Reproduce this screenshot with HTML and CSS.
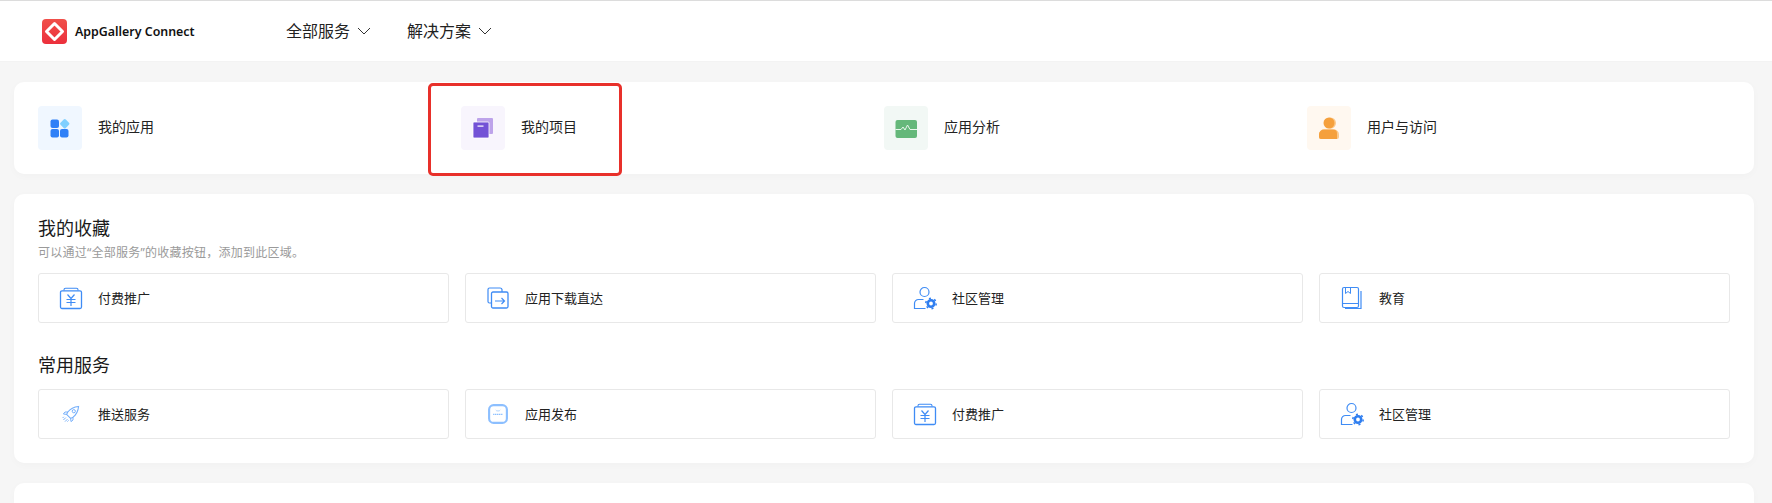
FILE: index.html
```html
<!DOCTYPE html>
<html lang="zh-CN">
<head>
<meta charset="utf-8">
<title>AppGallery Connect</title>
<link rel="stylesheet" href="styles.css">
</head>
<body>
<svg class="defs" width="0" height="0" aria-hidden="true">
  <symbol id="i-pay" viewBox="0 0 24 24">
    <path d="M5 4.500V3.800A1.500 1.500 0 0 1 6.500 2.300h11A1.500 1.500 0 0 1 19 3.800V4.500" fill="none" stroke="currentColor" stroke-width="1.100"/>
    <rect x="1.500" y="4.800" width="21" height="17.700" rx="1.500" fill="none" stroke="currentColor" stroke-width="1.300"/>
    <path d="M8.500 8.500 12 12.500l3.500-4M7.500 13.500h9M7.500 16.500h9M12 12.500V20" fill="none" stroke="currentColor" stroke-width="1.200"/>
  </symbol>
  <symbol id="i-direct" viewBox="0 0 24 24">
    <path d="M5.500 17H3.500A1.500 1.500 0 0 1 2 15.500V3.500A1.500 1.500 0 0 1 3.500 2H14A2 2 0 0 1 16 3.500V6" fill="none" stroke="currentColor" stroke-width="1.200"/>
    <rect x="5.500" y="6" width="16.500" height="16" rx="1.500" fill="none" stroke="currentColor" stroke-width="1.300"/>
    <path d="M9 15h9.500M15.500 12l3 3-3 3" fill="none" stroke="currentColor" stroke-width="1.200"/>
  </symbol>
  <symbol id="i-user" viewBox="0 0 24 24">
    <circle cx="11.500" cy="6" r="4.500" fill="none" stroke="currentColor" stroke-width="1.200"/>
    <path d="M10.500 13.500H5.500A4 4 0 0 0 1.500 17.500V22.500H12.500" fill="none" stroke="currentColor" stroke-width="1.200"/>
    <circle cx="18" cy="17.500" r="3.200" fill="none" stroke="#2f7ef0" stroke-width="2.600"/>
    <circle cx="18" cy="17.500" r="5.200" fill="none" stroke="#2f7ef0" stroke-width="1.500" stroke-dasharray="2 3.450"/>
  </symbol>
  <symbol id="i-book" viewBox="0 0 24 24">
    <rect x="2.500" y="1.500" width="16" height="20" rx="1.500" fill="none" stroke="currentColor" stroke-width="1.200"/>
    <path d="M2.500 17.500h16M21 5v17.500H5" fill="none" stroke="currentColor" stroke-width="1.200"/>
    <path d="M5.500 2v5.500l2.500-2 2.500 2V2" fill="none" stroke="currentColor" stroke-width="1"/>
  </symbol>
  <symbol id="i-rocket" viewBox="-3 -3 30 30">
    <path d="M8 9.500C11 5.500 16 3 21.500 2.500 21 8 18.500 13 14.500 16l-3 1.500-5-5z" fill="none" stroke="currentColor" stroke-width="1.300"/>
    <circle cx="15.500" cy="8.500" r="2" fill="none" stroke="currentColor" stroke-width="1.200"/>
    <path d="M8 9.500H4.500L2.500 12l4 .5M14.500 16v3.500L12 21.500l-.5-4M5.500 16.500l-3 3M7.500 18.500l-3 3M3 15.500 1.500 17M9 20l-1.500 1.500" fill="none" stroke="currentColor" stroke-width="1.200"/>
  </symbol>
  <symbol id="i-publish" viewBox="-1.500 -1.500 27 27">
    <rect x="2" y="2" width="20" height="20" rx="5" fill="none" stroke="#8cbfff" stroke-width="2.400"/>
    <path d="M9.500 7.500c.5 1.500 4.500 1.500 5 0" fill="none" stroke="#a9cffd" stroke-width="1"/>
    <path d="M6.500 12.500h11" fill="none" stroke="#8cbfff" stroke-width="1.500" stroke-dasharray="1.500 .6"/>
  </symbol>
</svg>

<div class="top-line"></div>
<header class="header">
  <div class="brand">
    <svg class="logo" viewBox="0 0 25 25" aria-hidden="true">
      <defs>
        <linearGradient id="logo-red" x1="0" y1="0" x2="0" y2="1">
          <stop offset="0" stop-color="#f0504a"/>
          <stop offset="1" stop-color="#ec2f3c"/>
        </linearGradient>
      </defs>
      <rect width="25" height="25" rx="4" fill="url(#logo-red)"/>
      <path d="M12.500 4.500 20.500 12.500 12.500 20.500 4.500 12.500z" fill="none" stroke="#fff" stroke-width="3" stroke-linejoin="round"/>
    </svg>
    <span class="brand-name">AppGallery Connect</span>
  </div>
  <nav class="nav">
    <a class="nav-item">全部服务<svg class="chev" viewBox="0 0 14 8" aria-hidden="true"><path d="M1 1l6 6 6-6"/></svg></a>
    <a class="nav-item">解决方案<svg class="chev" viewBox="0 0 14 8" aria-hidden="true"><path d="M1 1l6 6 6-6"/></svg></a>
  </nav>
</header>

<main class="main">
  <section class="card quick">
    <div class="quick-item">
      <span class="badge badge-blue">
        <svg class="badge-icon" viewBox="0 0 44 44" aria-hidden="true">
          <rect x="12.500" y="13.500" width="8.500" height="8.500" rx="2" fill="#2f80f7"/>
          <rect x="12.500" y="23" width="8.500" height="8.500" rx="2" fill="#2f80f7"/>
          <rect x="22" y="23" width="8.500" height="8.500" rx="2" fill="#2f80f7"/>
          <rect x="23" y="14" width="7.500" height="7.500" rx="1.500" fill="#80d0ff" transform="rotate(45 26.750 17.750)"/>
        </svg>
      </span>
      <span class="quick-label">我的应用</span>
    </div>
    <div class="quick-item">
      <span class="badge badge-purple">
        <svg class="badge-icon" viewBox="0 0 44 44" aria-hidden="true">
          <rect x="16" y="12" width="16" height="16" rx="1" fill="#bda3ea"/>
          <rect x="12" y="16" width="16" height="16" rx="1" fill="#7352d6" stroke="#fff" stroke-width=".8"/>
          <rect x="16.500" y="19.500" width="6" height="1.200" fill="#fff"/>
        </svg>
      </span>
      <span class="quick-label">我的项目</span>
    </div>
    <div class="quick-item">
      <span class="badge badge-green">
        <svg class="badge-icon" viewBox="0 0 44 44" aria-hidden="true">
          <rect x="11.500" y="14" width="21.500" height="18" rx="2" fill="#65b87a"/>
          <path d="M11.500 23.500h5.500l2-2.500 2 3 2.500-5 2.500 4.500H33" fill="none" stroke="#e8f6ec" stroke-width="1"/>
        </svg>
      </span>
      <span class="quick-label">应用分析</span>
    </div>
    <div class="quick-item">
      <span class="badge badge-orange">
        <svg class="badge-icon" viewBox="0 0 44 44" aria-hidden="true">
          <circle cx="23.500" cy="17" r="5.500" fill="#fbc98c"/>
          <circle cx="22" cy="17" r="5.500" fill="#f5a03c"/>
          <path d="M14 33a2 2 0 0 1-2-2v-2.500a5 5 0 0 1 5-5h10a5 5 0 0 1 5 5V31a2 2 0 0 1-2 2z" fill="#fbc98c"/>
          <path d="M14 33a2 2 0 0 1-2-2v-2.500a5 5 0 0 1 5-5h9a4 4 0 0 1 4 4V33z" fill="#f5a03c"/>
        </svg>
      </span>
      <span class="quick-label">用户与访问</span>
    </div>
    <div class="highlight"></div>
  </section>

  <section class="card services">
    <h2 class="section-title">我的收藏</h2>
    <p class="section-note">可以通过“全部服务”的收藏按钮，添加到此区域。</p>
    <div class="tiles tiles-fav">
      <div class="tile"><svg class="tile-icon"><use href="#i-pay"/></svg><span class="tile-label">付费推广</span></div>
      <div class="tile"><svg class="tile-icon"><use href="#i-direct"/></svg><span class="tile-label">应用下载直达</span></div>
      <div class="tile"><svg class="tile-icon"><use href="#i-user"/></svg><span class="tile-label">社区管理</span></div>
      <div class="tile"><svg class="tile-icon"><use href="#i-book"/></svg><span class="tile-label">教育</span></div>
    </div>
    <h2 class="section-title section-title-gap">常用服务</h2>
    <div class="tiles tiles-common">
      <div class="tile"><svg class="tile-icon tile-icon-soft"><use href="#i-rocket"/></svg><span class="tile-label">推送服务</span></div>
      <div class="tile"><svg class="tile-icon tile-icon-soft"><use href="#i-publish"/></svg><span class="tile-label">应用发布</span></div>
      <div class="tile"><svg class="tile-icon"><use href="#i-pay"/></svg><span class="tile-label">付费推广</span></div>
      <div class="tile"><svg class="tile-icon"><use href="#i-user"/></svg><span class="tile-label">社区管理</span></div>
    </div>
  </section>

  <section class="card rest"></section>
</main>
</body>
</html>
```

FILE: styles.css
```css
* { box-sizing: border-box; }

html, body {
  margin: 0;
  height: 100%;
  overflow: hidden;
}

body {
  background: #f6f6f6;
  color: #1f1f1f;
  font-family: "Noto Sans", "Noto Sans CJK SC", sans-serif;
  font-size: 14px;
}

.defs { display: block; height: 0; }

.top-line { height: 1px; background: #dcdcdc; }

.header {
  height: 61px;
  background: #fff;
  border-bottom: 1px solid #f3f3f3;
  display: flex;
  align-items: center;
  padding-left: 42px;
}

.brand {
  display: flex;
  align-items: center;
  gap: 8px;
  width: 244px;
}

.logo { width: 25px; height: 25px; flex: none; }

.brand-name {
  font-size: 12.4px;
  font-weight: 600;
  color: #111;
  white-space: nowrap;
}

.nav { display: flex; gap: 36px; }

.nav-item {
  display: flex;
  align-items: center;
  gap: 7px;
  font-size: 16px;
  line-height: 24px;
  color: #222;
}

.chev {
  width: 14px;
  height: 8px;
  fill: none;
  stroke: #333;
  stroke-width: 1;
}

.main {
  padding: 20px 18px 0 14px;
  display: flex;
  flex-direction: column;
  gap: 20px;
}

.card {
  background: #fff;
  border-radius: 10px;
  box-shadow: 0 2px 8px rgba(0, 0, 0, .025);
}

.quick {
  position: relative;
  height: 92px;
  padding: 0 24px;
  display: grid;
  grid-template-columns: repeat(4, 1fr);
  align-items: center;
}

.quick-item {
  display: flex;
  align-items: center;
  gap: 16px;
}

.badge {
  width: 44px;
  height: 44px;
  border-radius: 4px;
  flex: none;
  display: block;
}

.badge-blue { background: #f0f7ff; }
.badge-purple { background: #f8f5fd; }
.badge-green { background: #f2f8f5; }
.badge-orange { background: #fff8f0; }

.badge-icon { display: block; width: 44px; height: 44px; }

.quick-label {
  line-height: 20px;
  padding-bottom: 3px;
  color: #222;
}

.highlight {
  position: absolute;
  left: 414px;
  top: 1px;
  width: 194px;
  height: 93px;
  border: 3px solid #e8302a;
  border-radius: 5px;
}

.services { padding: 22px 24px 24px; }

.section-title {
  margin: 0;
  font-size: 18px;
  line-height: 24px;
  font-weight: 400;
  color: #1a1a1a;
}

.section-title-gap { margin-top: 30px; }

.section-note {
  margin: 4px 0 0;
  font-size: 12px;
  line-height: 18px;
  letter-spacing: .25px;
  color: #9a9a9a;
}

.tiles {
  display: grid;
  grid-template-columns: repeat(4, 1fr);
  gap: 16px;
}

.tiles-fav { margin-top: 11px; }
.tiles-common { margin-top: 12px; }

.tile {
  height: 50px;
  border: 1px solid #e8e8e8;
  border-radius: 3px;
  display: flex;
  align-items: center;
  gap: 15px;
  padding-left: 20px;
}

.tile-label {
  font-size: 13px;
  line-height: 18px;
  color: #222;
}

.tile-icon {
  width: 24px;
  height: 24px;
  flex: none;
  color: #3f8cf5;
}

.tile-icon-soft { color: #73aefa; }

.rest {
  height: 20px;
  border-radius: 10px 10px 0 0;
}
```
